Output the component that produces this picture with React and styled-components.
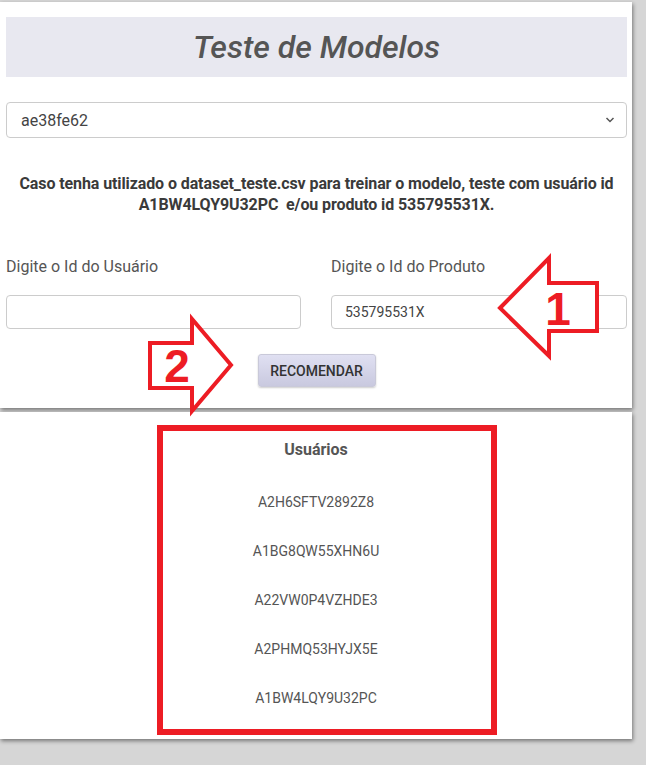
import React from 'react';
import styled, { createGlobalStyle } from 'styled-components';

const GlobalStyle = createGlobalStyle`
  body {
    margin: 0;
    background: #d6d6d6;
    font-family: Roboto, "Liberation Sans", Arial, sans-serif;
  }
`

const Page = styled.div`
  position: relative;
  width: 632px;
  padding-top: 2px;
  padding-bottom: 26px;
`
const Card = styled.div`
  background: #fff;
  box-shadow: 1px 2px 4px rgba(0, 0, 0, 0.45);
  box-sizing: border-box;
`
const FormCard = styled(Card)`
  padding: 15px 5px 21px 6px;
  display: flex;
  flex-direction: column;
`
const Header = styled.div`
  height: 60px;
  background: #e8e8f0;
  display: flex;
  align-items: center;
  justify-content: center;
`
const Title = styled.h1`
  margin: 0;
  font-size: 32px;
  font-style: italic;
  font-weight: 500;
  color: #555;
`
const SelectWrap = styled.div`
  position: relative;
  margin-top: 25px;
`
const Select = styled.select`
  appearance: none;
  width: 100%;
  height: 36px;
  box-sizing: border-box;
  border: 1px solid #ccc;
  border-radius: 4px;
  background: #fff;
  padding: 0 14px;
  font-family: inherit;
  font-size: 16px;
  color: #444;
`
const Chevron = styled.svg`
  position: absolute;
  right: 12px;
  top: 14px;
  pointer-events: none;
`
const Hint = styled.p`
  margin: 35px 0 0;
  text-align: center;
  font-weight: 700;
  font-size: 16px;
  line-height: 21px;
  letter-spacing: -0.1px;
  color: #3a3a3a;
  white-space: pre-wrap;
`
const Fields = styled.div`
  display: grid;
  grid-template-columns: 295px 296px;
  column-gap: 30px;
  margin-top: 42px;
`
const Field = styled.div`
  display: flex;
  flex-direction: column;
`
const Label = styled.label`
  font-size: 16px;
  line-height: 20px;
  color: #555;
`
const Input = styled.input`
  margin-top: 18px;
  height: 34px;
  box-sizing: border-box;
  border: 1px solid #ccc;
  border-radius: 4px;
  padding: 0 13px;
  font-family: inherit;
  font-size: 14px;
  color: #444;
  outline: none;
`
const Button = styled.button`
  align-self: center;
  margin-top: 25px;
  width: 118px;
  height: 33px;
  border: 1px solid #c9c9d9;
  border-radius: 3px;
  background: linear-gradient(#e0e0f2, #c9c9df);
  box-shadow: 0 1px 2px rgba(0, 0, 0, 0.2);
  font-family: inherit;
  font-weight: 500;
  font-size: 14px;
  color: #333;
`
const ResultCard = styled(Card)`
  margin-top: 4px;
  height: 327px;
  padding-top: 28px;
  display: flex;
  flex-direction: column;
  align-items: center;
`
const ResultTitle = styled.h3`
  margin: 0;
  font-size: 16px;
  font-weight: 700;
  line-height: 20px;
  color: #555;
`
const ResultList = styled.ul`
  list-style: none;
  margin: 34px 0 0;
  padding: 0;
  display: flex;
  flex-direction: column;
  align-items: center;
  gap: 32px;
`
const ResultItem = styled.li`
  font-size: 14px;
  line-height: 17px;
  color: #555;
`
const Annotations = styled.svg`
  position: absolute;
  left: 0;
  top: 0;
  pointer-events: none;
`

const users = ['A2H6SFTV2892Z8', 'A1BG8QW55XHN6U', 'A22VW0P4VZHDE3', 'A2PHMQ53HYJX5E', 'A1BW4LQY9U32PC']

const App = () => (
  <Page>
    <GlobalStyle />
    <FormCard>
      <Header>
        <Title>Teste de Modelos</Title>
      </Header>
      <SelectWrap>
        <Select defaultValue="ae38fe62">
          <option value="ae38fe62">ae38fe62</option>
        </Select>
        <Chevron width="10" height="8" viewBox="0 0 10 8">
          <path d="M1.5 2 L5 5.5 L8.5 2" fill="none" stroke="#555" strokeWidth="1.5" />
        </Chevron>
      </SelectWrap>
      <Hint>
        {'Caso tenha utilizado o dataset_teste.csv para treinar o modelo, teste com usuário id\nA1BW4LQY9U32PC  e/ou produto id 535795531X.'}
      </Hint>
      <Fields>
        <Field>
          <Label>Digite o Id do Usuário</Label>
          <Input defaultValue="" />
        </Field>
        <Field>
          <Label>Digite o Id do Produto</Label>
          <Input defaultValue="535795531X" />
        </Field>
      </Fields>
      <Button>RECOMENDAR</Button>
    </FormCard>
    <ResultCard>
      <ResultTitle>Usuários</ResultTitle>
      <ResultList>
        {users.map(u => <ResultItem key={u}>{u}</ResultItem>)}
      </ResultList>
    </ResultCard>

    <Annotations width="646" height="765" viewBox="0 0 646 765">
      <g stroke="#ed1c24" strokeWidth="4" strokeLinejoin="miter" fill="#fff">
        <path d="M500 308 L549 258 L549 283 L597 283 L597 331 L549 331 L549 356 Z" />
        <path d="M231 365 L192 319 L192 343 L150 343 L150 388 L192 388 L192 411 Z" />
      </g>
      <g fill="#ed1c24" fontFamily="'Liberation Sans', Arial, sans-serif" fontWeight="700" fontSize="46" textAnchor="middle">
        <text x="558" y="325">1</text>
        <text x="177" y="382">2</text>
      </g>
      <rect x="160" y="428" width="334" height="304" fill="none" stroke="#ed1c24" strokeWidth="6" />
    </Annotations>
  </Page>
)

export default App;
